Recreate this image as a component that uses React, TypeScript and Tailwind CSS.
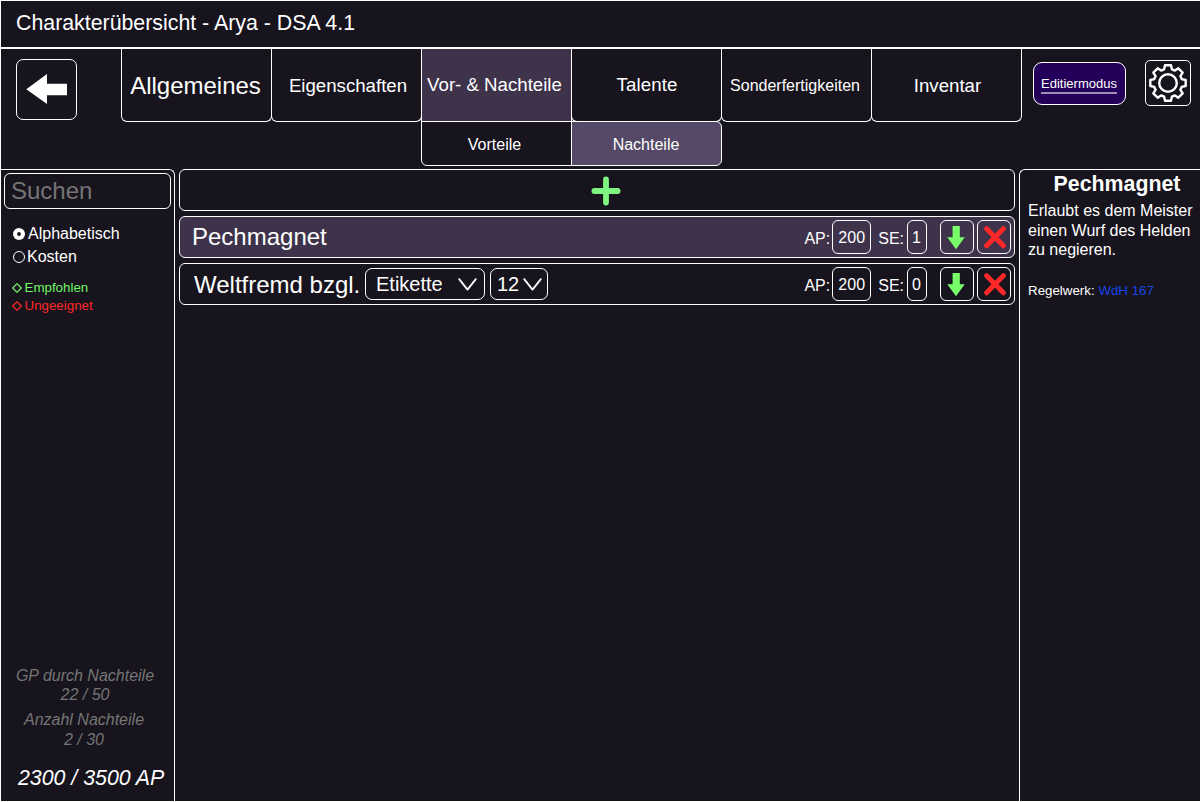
import type { ReactNode } from "react";

type Tab = { label: string; style: string };

const TABS: Tab[] = [
  { label: "Allgemeines", style: "rounded-b-[6px] text-[24px] pt-[1px] pr-[2px]" },
  { label: "Eigenschaften", style: "rounded-b-[6px] text-[18.67px] pt-[2px] pl-[3px]" },
  { label: "Vor- & Nachteile", style: "bg-[#3e334b] text-[18.67px] pr-[4px]" },
  { label: "Talente", style: "rounded-b-[6px] text-[18.67px] tracking-[0.1px] pl-[1px]" },
  { label: "Sonderfertigkeiten", style: "rounded-b-[6px] text-[16px] pr-[3px] pt-[2px]" },
  { label: "Inventar", style: "rounded-b-[6px] text-[18.67px] pt-[2px] pl-[2px]" },
];

function Gear() {
  return (
    <svg width="38" height="38" viewBox="-19 -19 38 38" fill="none" stroke="#fff" strokeWidth="2.4" strokeLinejoin="round">
      <path d="M-3-17.7H3L3.9-13.7L6.9-12.4L10.3-14.7L14.7-10.3L12.4-6.9L13.7-3.9L17.7-3V3L13.7 3.9L12.4 6.9L14.7 10.3L10.3 14.7L6.9 12.4L3.9 13.7L3 17.7H-3L-3.9 13.7L-6.9 12.4L-10.3 14.7L-14.7 10.3L-12.4 6.9L-13.7 3.9L-17.7 3V-3L-13.7-3.9L-12.4-6.9L-14.7-10.3L-10.3-14.7L-6.9-12.4L-3.9-13.7Z" />
      <circle r="8.8" />
    </svg>
  );
}

function Chevron() {
  return (
    <svg width="19" height="14" viewBox="0 0 19 14" fill="none" stroke="#fff" strokeWidth="1.8" strokeLinecap="round" strokeLinejoin="round">
      <path d="M1.2 2.1L9.5 12.6L17.8 2.1" />
    </svg>
  );
}

function Diamond() {
  return (
    <svg width="10" height="10" viewBox="0 0 10 10" fill="none" stroke="currentColor" strokeWidth="1.2">
      <path d="M5 .7L9.3 5L5 9.3L.7 5Z" />
    </svg>
  );
}

function Entry({ children, se, active = false }: { children: ReactNode; se: number; active?: boolean }) {
  return (
    <div className={`flex h-[42px] items-center rounded-[6px] border border-white pr-[3px] ${active ? "bg-[#3e334b]" : ""}`}>
      <div className="flex flex-1 items-center">{children}</div>
      <span className="pt-[3px] text-[16px] leading-5">AP:</span>
      <div className="ml-[2px] flex h-[34px] w-[39px] items-center justify-center rounded-[6px] border border-white pt-px text-[16px]">200</div>
      <span className="ml-[7px] pt-[3px] text-[16px] leading-5">SE:</span>
      <div className="ml-[3px] flex h-[34px] w-[20px] items-center justify-center rounded-[6px] border border-white pr-px pt-px text-[16px]">{se}</div>
      <button className="ml-[13px] flex h-[34px] w-[34px] items-center justify-center rounded-[6px] border border-white">
        <svg width="32" height="32" viewBox="0 0 32 32"><path d="M11.6 5H18.8V16.3H23.7L15 28.2L6.3 16.3H11.6Z" fill="#78ff6a" /></svg>
      </button>
      <button className="ml-[3px] flex h-[34px] w-[34px] items-center justify-center rounded-[6px] border border-white">
        <svg width="32" height="32" viewBox="0 0 32 32"><path d="M8.6 7.7L25.4 24.8M25.4 7.7L8.6 24.8" stroke="#ff2828" strokeWidth="5" strokeLinecap="round" /></svg>
      </button>
    </div>
  );
}

export default function App() {
  return (
    <div className="flex h-[802px] w-[1201px] flex-col overflow-hidden border border-white bg-[#17141d] font-['Liberation_Sans',sans-serif] text-white">
      <header className="h-[48px] shrink-0 border-b-2 border-white pl-[15px] pt-[7px] text-[21.33px] leading-[30px]">
        Charakterübersicht - Arya - DSA 4.1
      </header>

      <div className="flex h-[120px] shrink-0 items-start">
        <button className="ml-[15px] mt-[10px] flex h-[61px] w-[61px] items-center justify-center rounded-[7px] border border-white">
          <svg width="59" height="59" viewBox="0 0 59 59"><path d="M9.3 29.3L30 14V23.7H50V35.3H30V44Z" fill="#fff" /></svg>
        </button>
        <nav className="ml-[44px] flex flex-col">
          <div className="flex">
            {TABS.map((tab) => (
              <div key={tab.label} className={`-mr-px flex h-[73px] w-[151px] items-center justify-center whitespace-nowrap border-x border-b border-white ${tab.style}`}>
                {tab.label}
              </div>
            ))}
          </div>
          <div className="-mt-px ml-[300px] flex text-[16px]">
            <div className="flex h-[45px] w-[151px] items-center justify-center rounded-bl-[6px] border border-white pr-[4px] pt-[3px]">Vorteile</div>
            <div className="-ml-px flex h-[45px] w-[151px] items-center justify-center rounded-r-[6px] border border-white bg-[#564867] pr-px pt-[3px]">Nachteile</div>
          </div>
        </nav>
        <button className="ml-[12px] mt-[13px] flex h-[43px] w-[93px] items-start justify-center rounded-[9px] border border-white bg-[#25005a] pr-px pt-[13px]">
          <span className="border-b-2 border-[#9a8fb0] pb-px text-[13px] leading-[15px]">Editiermodus</span>
        </button>
        <button className="ml-[19px] mt-[11px] flex h-[46px] w-[46px] items-center justify-center rounded-[5px] border border-white">
          <Gear />
        </button>
      </div>

      <div className="flex min-h-0 flex-1 gap-[4px]">
        <aside className="flex w-[174px] flex-col rounded-tr-[6px] border-r border-t border-white">
          <div className="ml-[3px] mt-[3px] h-[36px] w-[167px] rounded-[6px] border border-white pl-[6px] text-[24px] leading-[34px] text-[#757575]">Suchen</div>
          <div className="ml-[12px] mt-[13px] flex flex-col text-[16px]">
            <div className="flex h-[23px] items-center gap-[3px]">
              <svg width="12" height="12" viewBox="0 0 12 12"><circle cx="6" cy="6" r="6" fill="#fff" /><circle cx="6" cy="6" r="1.9" fill="#17141d" /></svg>
              Alphabetisch
            </div>
            <div className="flex h-[23px] items-center gap-[2px]">
              <svg width="12" height="12" viewBox="0 0 12 12"><circle cx="6" cy="6" r="5.5" fill="none" stroke="#fff" /></svg>
              Kosten
            </div>
          </div>
          <div className="ml-[11px] mt-[11px] flex flex-col text-[13.33px]">
            <div className="flex h-[18px] items-center gap-[2.5px] text-[#73f565]">
              <Diamond />
              Empfohlen
            </div>
            <div className="flex h-[18px] items-center gap-[2.5px] text-[#ff2828]">
              <Diamond />
              Ungeeignet
            </div>
          </div>
          <div className="mt-auto pr-[5px] text-center text-[16px] italic leading-[19.5px] text-[#757575]">
            <div>GP durch Nachteile<br />22 / 50</div>
            <div className="mt-[5.5px] pr-[2px]">Anzahl Nachteile<br />2 / 30</div>
          </div>
          <div className="mb-[8px] mt-[14px] pl-[17px] text-[21.33px] italic leading-[30px]">2300 / 3500 AP</div>
        </aside>

        <main className="flex w-[836px] flex-col gap-[5px]">
          <button className="flex h-[42px] items-center justify-center rounded-[6px] border border-white pl-[18px] pt-px">
            <svg width="30" height="30" viewBox="0 0 30 30"><path d="M15 3.4V26.6M3.4 15H26.6" stroke="#80f481" strokeWidth="5.8" strokeLinecap="round" /></svg>
          </button>
          <Entry se={1} active>
            <span className="pl-[12px] text-[24px] leading-8">Pechmagnet</span>
          </Entry>
          <Entry se={0}>
            <span className="w-[185px] whitespace-nowrap pl-[14px] pt-[2px] text-[24px] leading-8">Weltfremd bzgl.</span>
            <div className="flex h-[32px] w-[120px] items-center justify-between rounded-[7px] border border-white pl-[10px] pr-[7px] text-[20px]">
              Etikette <Chevron />
            </div>
            <div className="ml-[5px] flex h-[32px] w-[58px] items-center justify-between rounded-[7px] border border-white pl-[6px] pr-[5px] text-[20px]">
              12 <Chevron />
            </div>
          </Entry>
        </main>

        <aside className="flex flex-1 flex-col rounded-tl-[6px] border-l border-t border-white pl-[8px]">
          <h2 className="pl-[6px] text-center text-[21.33px] font-bold leading-[29px]">Pechmagnet</h2>
          <p className="mt-[2px] whitespace-nowrap text-[16px] leading-[19.5px]">
            Erlaubt es dem Meister<br />einen Wurf des Helden<br />zu negieren.
          </p>
          <p className="mt-[22px] text-[13.33px] leading-[18px]">
            Regelwerk: <a className="text-[#1447e6]">WdH 167</a>
          </p>
        </aside>
      </div>
    </div>
  );
}
